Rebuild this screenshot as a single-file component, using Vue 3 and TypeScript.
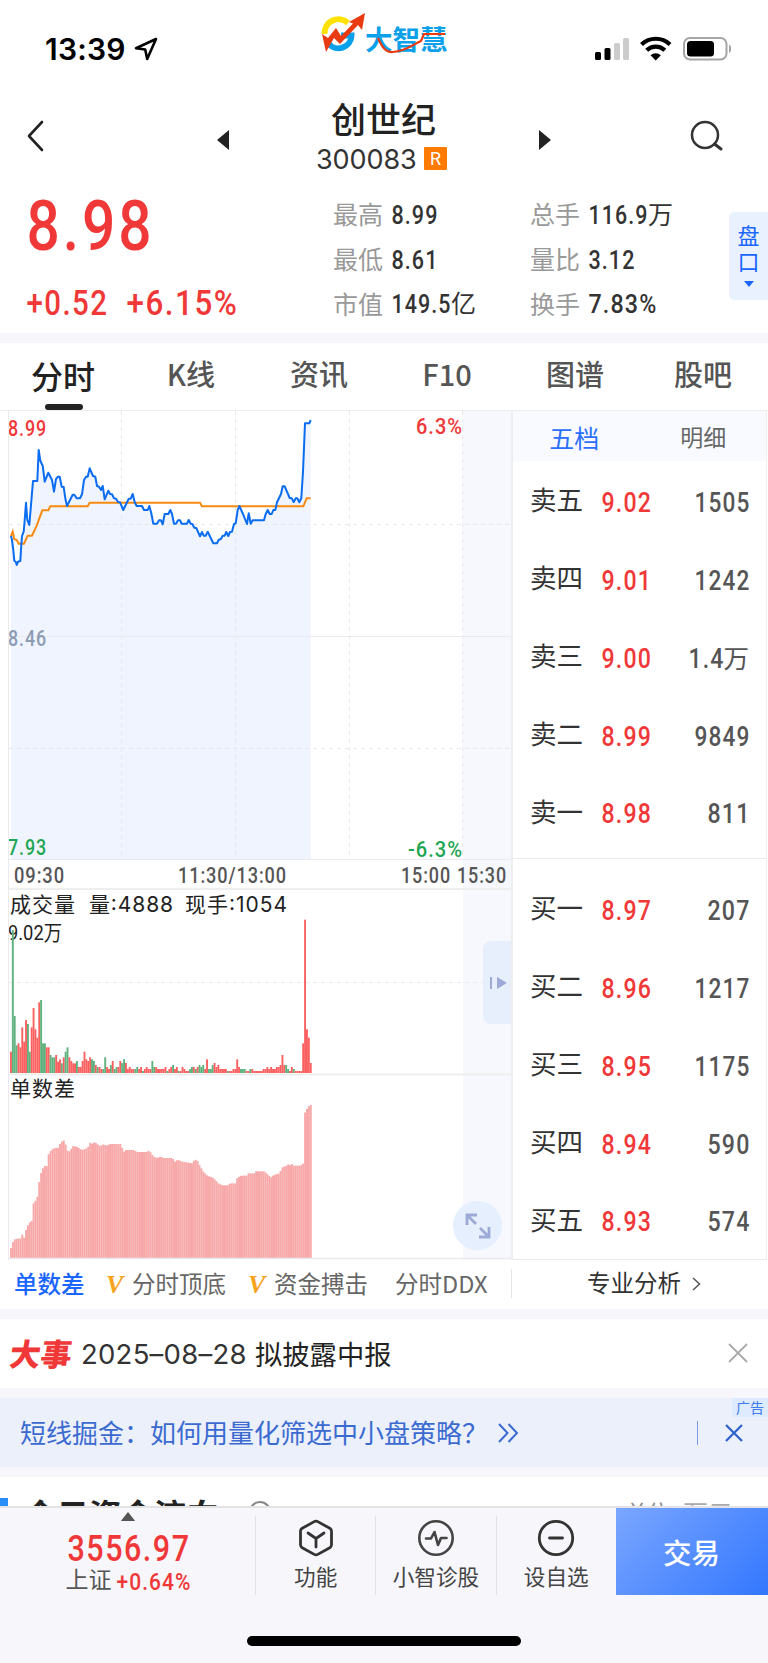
<script setup lang="ts">
import { h, type FunctionalComponent } from 'vue'

interface FigProps { t: string; w: number; cap: number; weight?: number }

// Condensed numerals: `w` is the set width, `cap` the digit height.
const Fig: FunctionalComponent<FigProps> = (p) =>
  h('svg', { width: p.w, height: p.cap, class: 'fig' }, [
    h('text', {
      x: 0.5,
      y: p.cap,
      'font-size': p.cap / 0.711,
      'font-weight': p.weight ?? 500,
      'font-family': 'Roboto, sans-serif',
      'letter-spacing': '0.05em',
      fill: 'currentColor',
      textLength: p.w + 1,
      lengthAdjust: 'spacingAndGlyphs',
    }, p.t),
  ])
Fig.props = ['t', 'w', 'cap', 'weight']

const stats = [
  { k: '最高', v: '8.99', w: 46, u: '' },
  { k: '总手', v: '116.9', w: 59, u: '万' },
  { k: '最低', v: '8.61', w: 46, u: '' },
  { k: '量比', v: '3.12', w: 46, u: '' },
  { k: '市值', v: '149.5', w: 59, u: '亿' },
  { k: '换手', v: '7.83%', w: 68, u: '' },
]
const tabs = ['分时', 'K线', '资讯', 'F10', '图谱', '股吧']

interface Level { k: string; p: string; q: string; w: number; u?: string }
const asks: Level[] = [
  { k: '卖五', p: '9.02', q: '1505', w: 55 },
  { k: '卖四', p: '9.01', q: '1242', w: 55 },
  { k: '卖三', p: '9.00', q: '1.4', w: 35, u: '万' },
  { k: '卖二', p: '8.99', q: '9849', w: 55 },
  { k: '卖一', p: '8.98', q: '811', w: 42 },
]
const bids: Level[] = [
  { k: '买一', p: '8.97', q: '207', w: 42 },
  { k: '买二', p: '8.96', q: '1217', w: 55 },
  { k: '买三', p: '8.95', q: '1175', w: 55 },
  { k: '买四', p: '8.94', q: '590', w: 42 },
  { k: '买五', p: '8.93', q: '574', w: 42 },
]

// Series are stored on a 3x grid; the price panel starts 6px below the grid's origin.
const third = (s: string): number[][] => s.split(' ').map((q) => q.split(',').map((n) => Number(n) / 3))
const line = (pts: number[][], dy: number): string => pts.map(([x, y]) => `${x.toFixed(1)},${(y + dy).toFixed(1)}`).join(' ')

const pricePts = third('33,393 36,405 40,435 43,467 47,470 50,480 54,470 61,468 64,420 66,393 71,380 74,345 78,293 82,345 88,360 93,300 99,228 112,228 116,135 121,167 128,182 134,230 145,203 156,225 162,260 168,222 174,215 179,215 185,245 191,246 196,280 201,303 218,269 223,269 230,280 240,280 246,268 252,225 258,215 263,215 269,190 279,213 286,215 291,243 297,245 303,255 308,243 314,283 325,257 330,267 336,268 342,280 348,281 354,291 360,292 370,315 386,281 392,281 398,267 404,292 410,303 426,303 432,315 443,315 448,303 454,325 460,356 471,356 477,346 483,346 488,358 494,327 505,327 511,315 516,327 522,356 528,356 534,346 540,346 545,356 561,356 566,345 572,356 577,357 583,368 589,369 600,394 606,381 611,392 617,392 623,380 640,415 651,415 656,404 662,403 668,392 674,392 679,381 685,393 690,381 696,380 702,357 707,355 713,315 718,303 729,327 741,357 746,325 752,356 758,346 792,346 797,327 803,315 809,327 815,327 820,315 826,315 831,292 843,267 848,244 854,244 869,279 875,280 881,291 887,280 892,280 898,292 904,280 909,200 915,55 928,55 932,45')
const avgPts = third('33,393 38,380 43,403 50,405 56,416 72,416 83,392 96,392 110,362 127,316 145,316 151,304 263,304 269,293 600,293 606,304 910,304 920,280 932,280')
const priceLine = line(pricePts, -6)
const avgLine = line(avgPts, -6)
const priceArea = `11,448 ${priceLine} 310.7,448`

const STEP = 905 / 480
const volumes = [
  64, 429, 171, 83, 89, 77, 137, 94, 159, 147, 64, 137, 195, 131, 106, 212, 219, 89, 89, 77, 77, 54, 47, 47, 54, 34, 41, 29, 47, 64,
  77, 47, 36, 29, 29, 36, 18, 18, 36, 64, 41, 36, 47, 41, 36, 24, 18, 18, 12, 12, 47, 18, 12, 24, 36, 12, 18, 18, 36, 30,
  41, 30, 12, 18, 12, 12, 12, 18, 12, 18, 6, 12, 18, 12, 12, 36, 18, 18, 12, 12, 12, 12, 18, 6, 12, 18, 24, 12, 18, 6,
  6, 18, 12, 6, 6, 12, 18, 18, 12, 18, 24, 18, 24, 12, 41, 12, 12, 24, 30, 18, 24, 12, 12, 12, 12, 6, 6, 6, 12, 12,
  41, 18, 12, 12, 12, 6, 6, 12, 12, 6, 6, 6, 6, 6, 12, 12, 18, 12, 18, 12, 12, 18, 18, 24, 54, 24, 24, 12, 6, 18,
  12, 6, 6, 6, 6, 89, 460, 131, 106, 30,
]
const falling = new Set([1, 2, 3, 9, 10, 16, 17, 18, 21, 22, 23, 27, 29, 30, 35, 43, 44, 46, 49, 50, 53, 55, 56, 59, 60, 66, 67, 70, 75, 76, 83, 86, 89, 95, 96, 98, 100, 101, 102, 105, 106, 107, 115, 122, 123, 124, 127, 146, 147, 150])
const volBars = volumes.map((v, i) => ({ x: 10 + i * STEP, v: v / 3, c: falling.has(i) ? '#5fb17d' : '#fb6060' }))

const diffPts = third('30,547 36,520 45,507 62,505 64,488 72,505 78,480 86,460 96,452 98,410 104,388 110,400 115,352 121,316 127,298 134,287 140,292 143,258 150,245 160,235 175,233 181,220 190,210 196,217 199,240 207,245 213,238 218,228 230,230 246,240 263,234 270,218 275,222 284,216 300,228 313,222 318,228 330,222 350,222 353,228 358,216 364,228 372,245 378,240 404,240 408,246 443,246 448,240 454,252 465,263 478,263 482,258 488,264 517,264 525,275 533,269 546,275 578,280 583,269 591,270 600,288 610,305 622,317 640,324 655,340 668,346 686,346 690,340 708,340 712,323 724,317 740,317 745,310 764,310 768,304 793,304 800,311 813,322 820,316 838,310 848,291 860,287 866,282 871,287 876,282 881,287 902,287 907,281 911,281 912,134 918,122 924,110 935,103')
const diffBars = volumes.map((_, i) => {
  const c = 10 + (i + 0.5) * STEP
  const k = Math.max(1, diffPts.findIndex((q) => q[0] >= c))
  const [a, b] = [diffPts[k - 1], diffPts[k]]
  const y = a[1] + ((b[1] - a[1]) * (c - a[0])) / (b[0] - a[0])
  return { x: 10 + i * STEP, v: 188 - y }
})
</script>

<template>
  <div class="app">
    <header class="status">
      <div class="clock">
        <span>13:39</span>
        <svg width="24" height="24" viewBox="0 0 24 24"><path d="M22 2 2 11.2l9.200 1.300L13.200 22Z" fill="none" stroke="#000" stroke-width="2.600" stroke-linejoin="round" /></svg>
      </div>
      <div class="brand">
        <svg class="mark" width="46" height="40" viewBox="0 0 46 40">
          <path d="M3.500 21A14 14 0 0 1 27 10" fill="none" stroke="#ffe100" stroke-width="6" />
          <path d="M7 30A13 13 0 0 0 30.500 22.500H20" fill="none" stroke="#0aa0ea" stroke-width="6" />
          <path d="M1 21 5 39 13 25 19 31 37 12 41 17 44 0 28 9 32 10.500 20 23 15 15 7 25Z" fill="#ea3a12" />
        </svg>
        <span class="brand-name">大智慧</span>
        <svg class="swoosh" width="82" height="28" viewBox="0 0 82 28"><path d="M14 11C18 20 22 26 29 25C42 24 48 18 57 14L60 7H81" fill="none" stroke="#ea3a12" stroke-width="2.200" /></svg>
      </div>
      <svg class="signals" width="140" height="28" viewBox="0 0 140 28">
        <g fill="#000"><rect x="4" y="17" width="6" height="8" rx="1.500" /><rect x="13.500" y="13" width="6" height="12" rx="1.500" /></g>
        <g fill="#ccc"><rect x="23" y="8" width="6" height="17" rx="1.500" /><rect x="32" y="3" width="6" height="22" rx="1.500" /></g>
        <g fill="none" stroke="#000" stroke-width="4.200"><path d="M50.500 9.500A20.500 20.500 0 0 1 79 9.500" /><path d="M55.700 15.300A13 13 0 0 1 73.800 15.300" /></g>
        <path d="M64.700 25.500 59.500 20.300A7.500 7.500 0 0 1 69.900 20.300Z" fill="#000" />
        <rect x="93" y="3" width="42.500" height="21.500" rx="6" fill="none" stroke="#a5a5a5" stroke-width="2" />
        <rect x="96" y="6" width="27" height="15.500" rx="3.500" /><path d="M138 9.500A5 5 0 0 1 138 18Z" fill="#a5a5a5" />
      </svg>
    </header>

    <nav class="titlebar">
      <svg class="back" width="17" height="32" viewBox="0 0 17 32"><path d="M15 2 2 16 15 30" fill="none" stroke="#222" stroke-width="2.600" stroke-linecap="round" stroke-linejoin="round" /></svg>
      <svg class="prev" width="12" height="20"><path d="M12 0V20L0 10Z" fill="#222" /></svg>
      <div class="name">
        <h1>创世纪</h1>
        <p><span>300083</span><b>R</b></p>
      </div>
      <svg class="next" width="12" height="20"><path d="M0 0V20L12 10Z" fill="#222" /></svg>
      <svg class="search" width="34" height="32" viewBox="0 0 34 32"><circle cx="15" cy="15" r="13" fill="none" stroke="#333" stroke-width="2.500" /><path d="M24.500 24 31 29" stroke="#333" stroke-width="3" stroke-linecap="round" /></svg>
    </nav>

    <section class="quote">
      <div class="last">
        <Fig t="8.98" :w="127" :cap="50" />
        <div class="chg"><Fig t="+0.52" :w="81" :cap="25" /><Fig t="+6.15%" :w="111" :cap="25" /></div>
      </div>
      <dl class="stats">
        <div v-for="s in stats" :key="s.k"><dt>{{ s.k }}</dt><dd><Fig :t="s.v" :w="s.w" :cap="18.5" /><span v-if="s.u">{{ s.u }}</span></dd></div>
      </dl>
      <div class="pankou"><span>盘</span><span>口</span><svg width="10" height="6"><path d="M0 0H10L5 6Z" fill="#1a66ff" /></svg></div>
    </section>

    <nav class="tabs"><span v-for="(t, i) in tabs" :key="t" :class="{ on: i === 0 }">{{ t }}</span></nav>

    <section class="board">
      <div class="charts">
        <svg class="price" width="513" height="478" viewBox="0 0 513 478">
          <rect x="463" y="0" width="48" height="478" fill="#f6f8fd" />
          <polygon :points="priceArea" fill="#eff4ff" />
          <g stroke="#e6e8ec" stroke-width="1" stroke-dasharray="4 4">
            <path d="M121.500 0V449M235.500 0V449M349.500 0V449M462.500 0V449" /><path d="M9 113.500H511M9 337.500H511" />
          </g>
          <path d="M9 225.500H511M9 448.500H511" stroke="#e8eaee" />
          <polyline :points="avgLine" fill="none" stroke="#f78b12" stroke-width="2" />
          <polyline :points="priceLine" fill="none" stroke="#0a6cf0" stroke-width="2" stroke-linejoin="round" />
          <g class="ax">
            <text x="8" y="25" textLength="39" lengthAdjust="spacingAndGlyphs" fill="#f03838">8.99</text>
            <text x="416" y="23" textLength="47" lengthAdjust="spacingAndGlyphs" fill="#f03838">6.3%</text>
            <text x="8" y="235" textLength="39" lengthAdjust="spacingAndGlyphs" fill="#8d9cb2">8.46</text>
            <text x="8" y="444" textLength="39" lengthAdjust="spacingAndGlyphs" fill="#1fa654">7.93</text>
            <text x="408" y="446" textLength="55" lengthAdjust="spacingAndGlyphs" fill="#1fa654">-6.3%</text>
            <g fill="#555">
              <text x="14" y="472" textLength="51" lengthAdjust="spacingAndGlyphs">09:30</text>
              <text x="178" y="472" textLength="109" lengthAdjust="spacingAndGlyphs">11:30/13:00</text>
              <text x="401" y="472" textLength="50" lengthAdjust="spacingAndGlyphs">15:00</text>
              <text x="457" y="472" textLength="50" lengthAdjust="spacingAndGlyphs">15:30</text>
            </g>
          </g>
        </svg>
        <svg class="vol" width="513" height="185" viewBox="0 0 513 185">
          <rect x="463" y="0" width="48" height="185" fill="#f6f8fd" />
          <path d="M9 0H511" stroke="#eee" stroke-width="2" />
          <path d="M9 93.500H511" stroke="#e8eaee" stroke-dasharray="4 4" />
          <g class="cap">
            <text x="10" y="23" textLength="65">成交量</text>
            <text x="89" y="23" textLength="84">量:4888</text>
            <text x="185" y="23" textLength="102">现手:1054</text>
          </g>
          <text class="peak" x="8" y="50.500" textLength="54" lengthAdjust="spacingAndGlyphs">9.02万</text>
          <rect v-for="b in volBars" :key="b.x" :x="b.x" :y="184 - b.v" width="1.890" :height="b.v" :fill="b.c" />
        </svg>
        <svg class="diff" width="513" height="186" viewBox="0 0 513 186">
          <rect x="463" y="0" width="48" height="186" fill="#f6f8fd" />
          <path d="M9 0.500H511" stroke="#eee" stroke-width="2" />
          <text class="cap" x="10" y="22" textLength="65">单数差</text>
          <rect v-for="b in diffBars" :key="b.x" :x="b.x" :y="184 - b.v" width="1.950" :height="b.v" fill="#f7a8a8" />
          <path d="M9 184.500H513" stroke="#eaeaee" stroke-width="1.500" />
        </svg>
        <div class="handle"><svg width="17" height="14"><path d="M1 1V13" stroke="#9daad6" stroke-width="2" /><path d="M7 1V13L17 7Z" fill="#9daad6" /></svg></div>
        <div class="expand"><svg width="26" height="26" viewBox="0 0 26 26"><path d="M12 2H2V12M2 2 11 11M14 24H24V14M24 24 15 15" fill="none" stroke="#9daad6" stroke-width="2.800" /></svg></div>
      </div>
      <div class="book">
        <div class="booktabs"><span class="on">五档</span><span>明细</span></div>
        <div class="side">
          <div v-for="l in asks" :key="l.k" class="lvl"><span>{{ l.k }}</span><Fig class="p" :t="l.p" :w="49.5" :cap="19.5" /><em><Fig :t="l.q" :w="l.w" :cap="19.5" />{{ l.u }}</em></div>
        </div>
        <div class="side bids">
          <div v-for="l in bids" :key="l.k" class="lvl"><span>{{ l.k }}</span><Fig class="p" :t="l.p" :w="49.5" :cap="19.5" /><em><Fig :t="l.q" :w="l.w" :cap="19.5" />{{ l.u }}</em></div>
        </div>
      </div>
    </section>

    <section class="indicators">
      <span class="on">单数差</span>
      <i>V</i><span class="a">分时顶底</span>
      <i>V</i><span class="b">资金搏击</span>
      <span class="c">分时DDX</span>
      <div class="pro"><span>专业分析</span><svg width="9" height="14"><path d="M1 1 7.500 7 1 13" fill="none" stroke="#555" stroke-width="1.500" /></svg></div>
    </section>

    <section class="event">
      <strong>大事</strong><span class="date">2025–08–28</span><span class="what">拟披露中报</span>
      <svg width="20" height="20"><path d="M1 1 19 19M19 1 1 19" stroke="#aaa" stroke-width="1.800" /></svg>
    </section>

    <section class="ad">
      <span>短线掘金：如何用量化筛选中小盘策略？</span>
      <svg class="more" width="21" height="20"><path d="M1 1 9.500 10 1 19M10.500 1 19 10 10.500 19" fill="none" stroke="#3b6bd0" stroke-width="2" /></svg>
      <hr />
      <svg width="18" height="18"><path d="M1 1 17 17M17 1 1 17" stroke="#2f63cc" stroke-width="2.300" /></svg>
      <b>广告</b>
    </section>

    <section class="flow"><div class="bar"></div><h2>今日资金流向</h2><div class="ring"></div><span>单位:</span><span class="unit">万元</span></section>

    <footer class="dock">
      <div class="index">
        <svg width="16" height="10"><path d="M8 0 16 10H0Z" fill="#555" /></svg>
        <Fig t="3556.97" :w="122" :cap="26.5" />
        <p><span>上证</span><Fig t="+0.64%" :w="74" :cap="17" /></p>
      </div>
      <div class="act">
        <svg width="38" height="38" viewBox="0 0 38 38" fill="none" stroke="#333" stroke-width="2.800" stroke-linejoin="round" stroke-linecap="round"><path d="M17.200 2.600Q19 1.600 20.800 2.600L32.800 9.300Q34.500 10.400 34.500 12.300V25.700Q34.500 27.600 32.800 28.700L20.800 35.400Q19 36.400 17.200 35.400L5.200 28.700Q3.500 27.600 3.500 25.700V12.300Q3.500 10.400 5.200 9.300Z" /><path d="M11 14 19 19.500 27 14M19 19.500V28" /></svg>
        <span>功能</span>
      </div>
      <div class="act">
        <svg width="38" height="38" viewBox="0 0 38 38" fill="none" stroke="#444" stroke-width="2.600" stroke-linejoin="round" stroke-linecap="round"><circle cx="19" cy="19" r="16.700" /><path d="M9 19.500H14L17.500 13 21 26 24 19H29.500" /></svg>
        <span>小智诊股</span>
      </div>
      <div class="act">
        <svg width="38" height="38" viewBox="0 0 38 38" fill="none" stroke="#333" stroke-width="2.800" stroke-linecap="round"><circle cx="19" cy="19" r="16.700" /><path d="M12.500 19H25.500" /></svg>
        <span>设自选</span>
      </div>
      <div class="trade">交易</div>
    </footer>
    <div class="home"><div></div></div>
  </div>
</template>

<style>
body { margin: 0; background: #fff; }
.fig { display: block; overflow: visible; flex: none; }
</style>
<style scoped>
.app { width: 768px; height: 1663px; overflow: hidden; display: flex; flex-direction: column; background: #fff; font-family: "Noto Sans CJK SC", sans-serif; color: #222; }
.app > * { flex: none; box-sizing: border-box; }
h1, h2, p, dl, dd { margin: 0; }
.status { height: 96px; display: flex; justify-content: space-between; position: relative; padding: 0 34px 0 45px; }
.clock { display: flex; padding-top: 31px; gap: 9px; font: 600 30px/36px Inter, sans-serif; color: #000; }
.clock span { width: 80px; letter-spacing: 0.2px; }
.clock svg { margin-top: 6px; }
.brand { position: absolute; left: 321px; top: 13px; display: flex; }
.brand-name { font-size: 27.5px; line-height: 28px; font-weight: 700; color: #0aa0ea; margin: 11px 0 0 -2px; }
.swoosh { position: absolute; left: 43px; top: 14px; }
.signals { margin-top: 35px; margin-right: 3px; }
.titlebar { height: 84px; display: grid; grid-template-columns: 217px 99px 136px 87px 1fr; position: relative; }
.titlebar svg { grid-row: 1; }
.back { margin: 24px 0 0 27px; grid-column: 1; }
.prev { grid-column: 2; margin-top: 34px; }
.name { grid-column: 3; }
.next { grid-column: 5; margin-top: 34px; }
.search { grid-column: 5; margin: 24px 0 0 151px; }
.name h1 { font-size: 35px; line-height: 48px; font-weight: 500; margin: -2px 0 0 15px; white-space: nowrap; }
.name p { display: flex; align-items: center; height: 34px; }
.name p span { font: 400 27px/32px Inter, sans-serif; width: 108px; color: #333; letter-spacing: -0.1px; margin-top: 1px; }
.name b { width: 23px; height: 23px; background: #ff7a00; color: #fff; font: 400 18px/23px Roboto, sans-serif; text-align: center; margin-top: -2px; border-radius: 1px; }
.quote { height: 153px; display: flex; position: relative; }
.last { color: #f03838; padding: 20px 0 0 26px; width: 307px; }
.chg { display: flex; gap: 19px; margin-top: 40px; }
.stats { display: grid; grid-template-columns: 197px 180px; grid-auto-rows: 44.7px; margin-top: 12px; height: 134px; }
.stats div { display: flex; align-items: center; font-size: 25px; line-height: 44px; }
.stats dt { color: #999; width: 58px; margin-top: -2px; }
.stats dd { display: flex; align-items: center; color: #333; gap: 1px; }
.stats dd span { margin-top: -3px; }
.pankou { position: absolute; left: 729px; top: 32px; width: 39px; height: 88px; background: #e9f1fe; border-radius: 5px 0 0 5px; color: #1a66ff; font-size: 22px; line-height: 26px; display: flex; flex-direction: column; align-items: center; padding-top: 9px; box-sizing: border-box; }
.pankou svg { margin-top: 8px; }
.tabs { height: 78px; border-top: 10px solid #f6f6fb; border-bottom: 1px solid #eee; display: grid; grid-template-columns: repeat(6, 128px); text-align: center; font-size: 29px; line-height: 61px; font-weight: 500; color: #555; position: relative; left: -1px; width: 769px; }
.tabs .on { font-size: 32px; line-height: 64px; color: #222; position: relative; }
.tabs .on::after { content: ""; position: absolute; left: 46px; top: 61px; width: 38px; height: 6px; border-radius: 3px; background: #222; }
.board { height: 849px; display: flex; }
.charts { width: 513px; position: relative; box-sizing: border-box; }
.charts::before { content: ""; position: absolute; inset: 0 0 0 8px; border-left: 1px solid #eaeaec; border-right: 2px solid #eee; z-index: 1; }
.charts > svg { display: block; overflow: visible; }
.ax { font: 500 21.2px Roboto, sans-serif; letter-spacing: 0.05em; }
.cap { font: 400 21px Inter, "Noto Sans CJK SC", sans-serif; fill: #222; }
.peak { font: 400 21px Roboto, "Noto Sans CJK SC", sans-serif; fill: #222; }
.handle { position: absolute; left: 483px; top: 530px; width: 28px; height: 83px; background: #e7effd; border-radius: 8px 0 0 8px; display: flex; align-items: center; justify-content: center; padding-left: 3px; box-sizing: border-box; }
.expand { position: absolute; left: 453px; top: 790px; width: 49px; height: 49px; border-radius: 50%; background: #e5effd; display: flex; align-items: center; justify-content: center; z-index: 2; }
.book { width: 254px; border-right: 1px solid #eee; border-bottom: 1px solid #e9e9ec; box-sizing: border-box; }
.booktabs { height: 50px; background: #f8faff; display: grid; grid-template-columns: 1fr 1fr; text-align: center; font-size: 23px; line-height: 50px; color: #666; }
.booktabs span { padding-left: 1px; }
.booktabs .on { font-size: 25px; color: #2b70ff; padding: 0 4px 0 0; line-height: 52px; }
.side { height: 398px; border-bottom: 1px solid #eaeaec; padding: 2px 17px 0; box-sizing: border-box; }
.side.bids { padding-top: 12px; border: 0; height: auto; }
.lvl { height: 77.8px; display: flex; align-items: center; font-size: 26.5px; line-height: 40px; color: #333; }
.lvl span { width: 71px; margin-top: -5px; }
.p { color: #f03838; }
.lvl em { margin-left: auto; font-style: normal; font-size: 25.5px; display: flex; align-items: center; color: #555; }
.indicators { height: 49px; display: flex; align-items: center; font-size: 23.5px; line-height: 48px; color: #666; padding-left: 14px; position: relative; white-space: nowrap; }
.indicators > * { margin-top: -3px; }
.indicators .on { color: #1a66ff; font-weight: 500; width: 92px; }
.indicators i { font: italic 700 26px/40px "Liberation Serif", serif; color: #f9a21b; width: 26px; margin-top: 0; }
.indicators .a { width: 116px; }
.indicators .b { width: 121px; }
.pro { position: absolute; left: 511px; top: 12px; height: 29px; border-left: 1px solid #e5e5e5; display: flex; align-items: center; gap: 11px; padding-left: 75px; color: #333; }
.pro span { margin-top: -3px; }
.event { height: 79px; border-top: 10px solid #f6f6fb; display: flex; align-items: center; position: relative; padding-left: 10px; font-size: 27.3px; line-height: 60px; }
.event > * { margin-top: -2px; }
.event strong { font-size: 31px; font-weight: 900; color: #f03838; transform: skewX(-8deg); width: 71px; letter-spacing: 0; }
.event .date { font-family: Inter, sans-serif; font-size: 27.5px; width: 174px; color: #333; letter-spacing: 0.25px; margin-top: 0; }
.event .what { margin-top: -1px; }
.event svg { margin-left: auto; margin-right: 20px; margin-top: -1px; }
.ad { height: 89px; border: solid #f6f6fb; border-width: 10px 0; background: #ecf0fb; display: flex; align-items: center; position: relative; padding-left: 20px; padding-right: 25px; font-size: 26px; color: #3b6bd0; }
.ad span { margin-top: -3px; width: 478px; white-space: nowrap; }
.ad hr { width: 1px; height: 24px; border: 0; background: #7b9be0; margin: 0 27px 0 auto; }
.ad b { position: absolute; right: 0; top: 0; width: 36px; height: 19px; background: #deeafe; color: #3b7cf0; font: 400 14px/18px "Noto Sans CJK SC", sans-serif; text-align: center; }
.flow { height: 31px; overflow: hidden; display: flex; border-bottom: 2px solid #e3e3e6; position: relative; }
.flow .bar { width: 8px; margin-top: 21px; background: #2a8cf5; height: 20px; flex: none; }
.flow h2 { font-size: 32.5px; line-height: 46px; font-weight: 700; margin: 14px 0 0 16px; width: 225px; white-space: nowrap; flex: none; }
.flow .ring { width: 18px; height: 18px; border: 2px solid #888; border-radius: 50%; margin-top: 24px; flex: none; }
.flow span { font-size: 21.500px; line-height: 30px; color: #888; margin: 20px 0 0 355px; white-space: nowrap; }
.flow .unit { margin-left: 8px; font-size: 25px; color: #aaa; }
.dock { height: 87px; background: #f6f6fb; display: flex; align-items: stretch; }
.index { width: 255px; display: flex; flex-direction: column; align-items: center; color: #f03838; padding-top: 4px; box-sizing: border-box; }
.index > svg:nth-child(2) { margin-top: 13px; }
.index p { display: flex; align-items: center; gap: 4px; height: 34px; margin-top: 3px; }
.index p span { font-size: 23px; line-height: 30px; color: #555; margin-top: -2px; }
.index p svg { margin-top: 5px; }
.act { width: 120.3px; display: flex; flex-direction: column; align-items: center; position: relative; font-size: 21.6px; line-height: 30px; color: #444; padding: 11px 0 0 1px; box-sizing: border-box; }
.act::before { content: ""; position: absolute; left: 0; top: 8px; bottom: 0; width: 1px; background: #e2e2e6; }
.act span { margin-top: 4px; }
.trade { flex: 1; background: linear-gradient(135deg, #7aa6ff, #3377ff); color: #fff; font-size: 28.5px; line-height: 87px; text-align: center; font-weight: 500; padding-right: 1px; }
.home { height: 68px; background: #f6f6fb; display: flex; justify-content: center; padding-top: 41px; }
.home div { width: 274px; height: 10px; border-radius: 5px; background: #000; }
</style>
